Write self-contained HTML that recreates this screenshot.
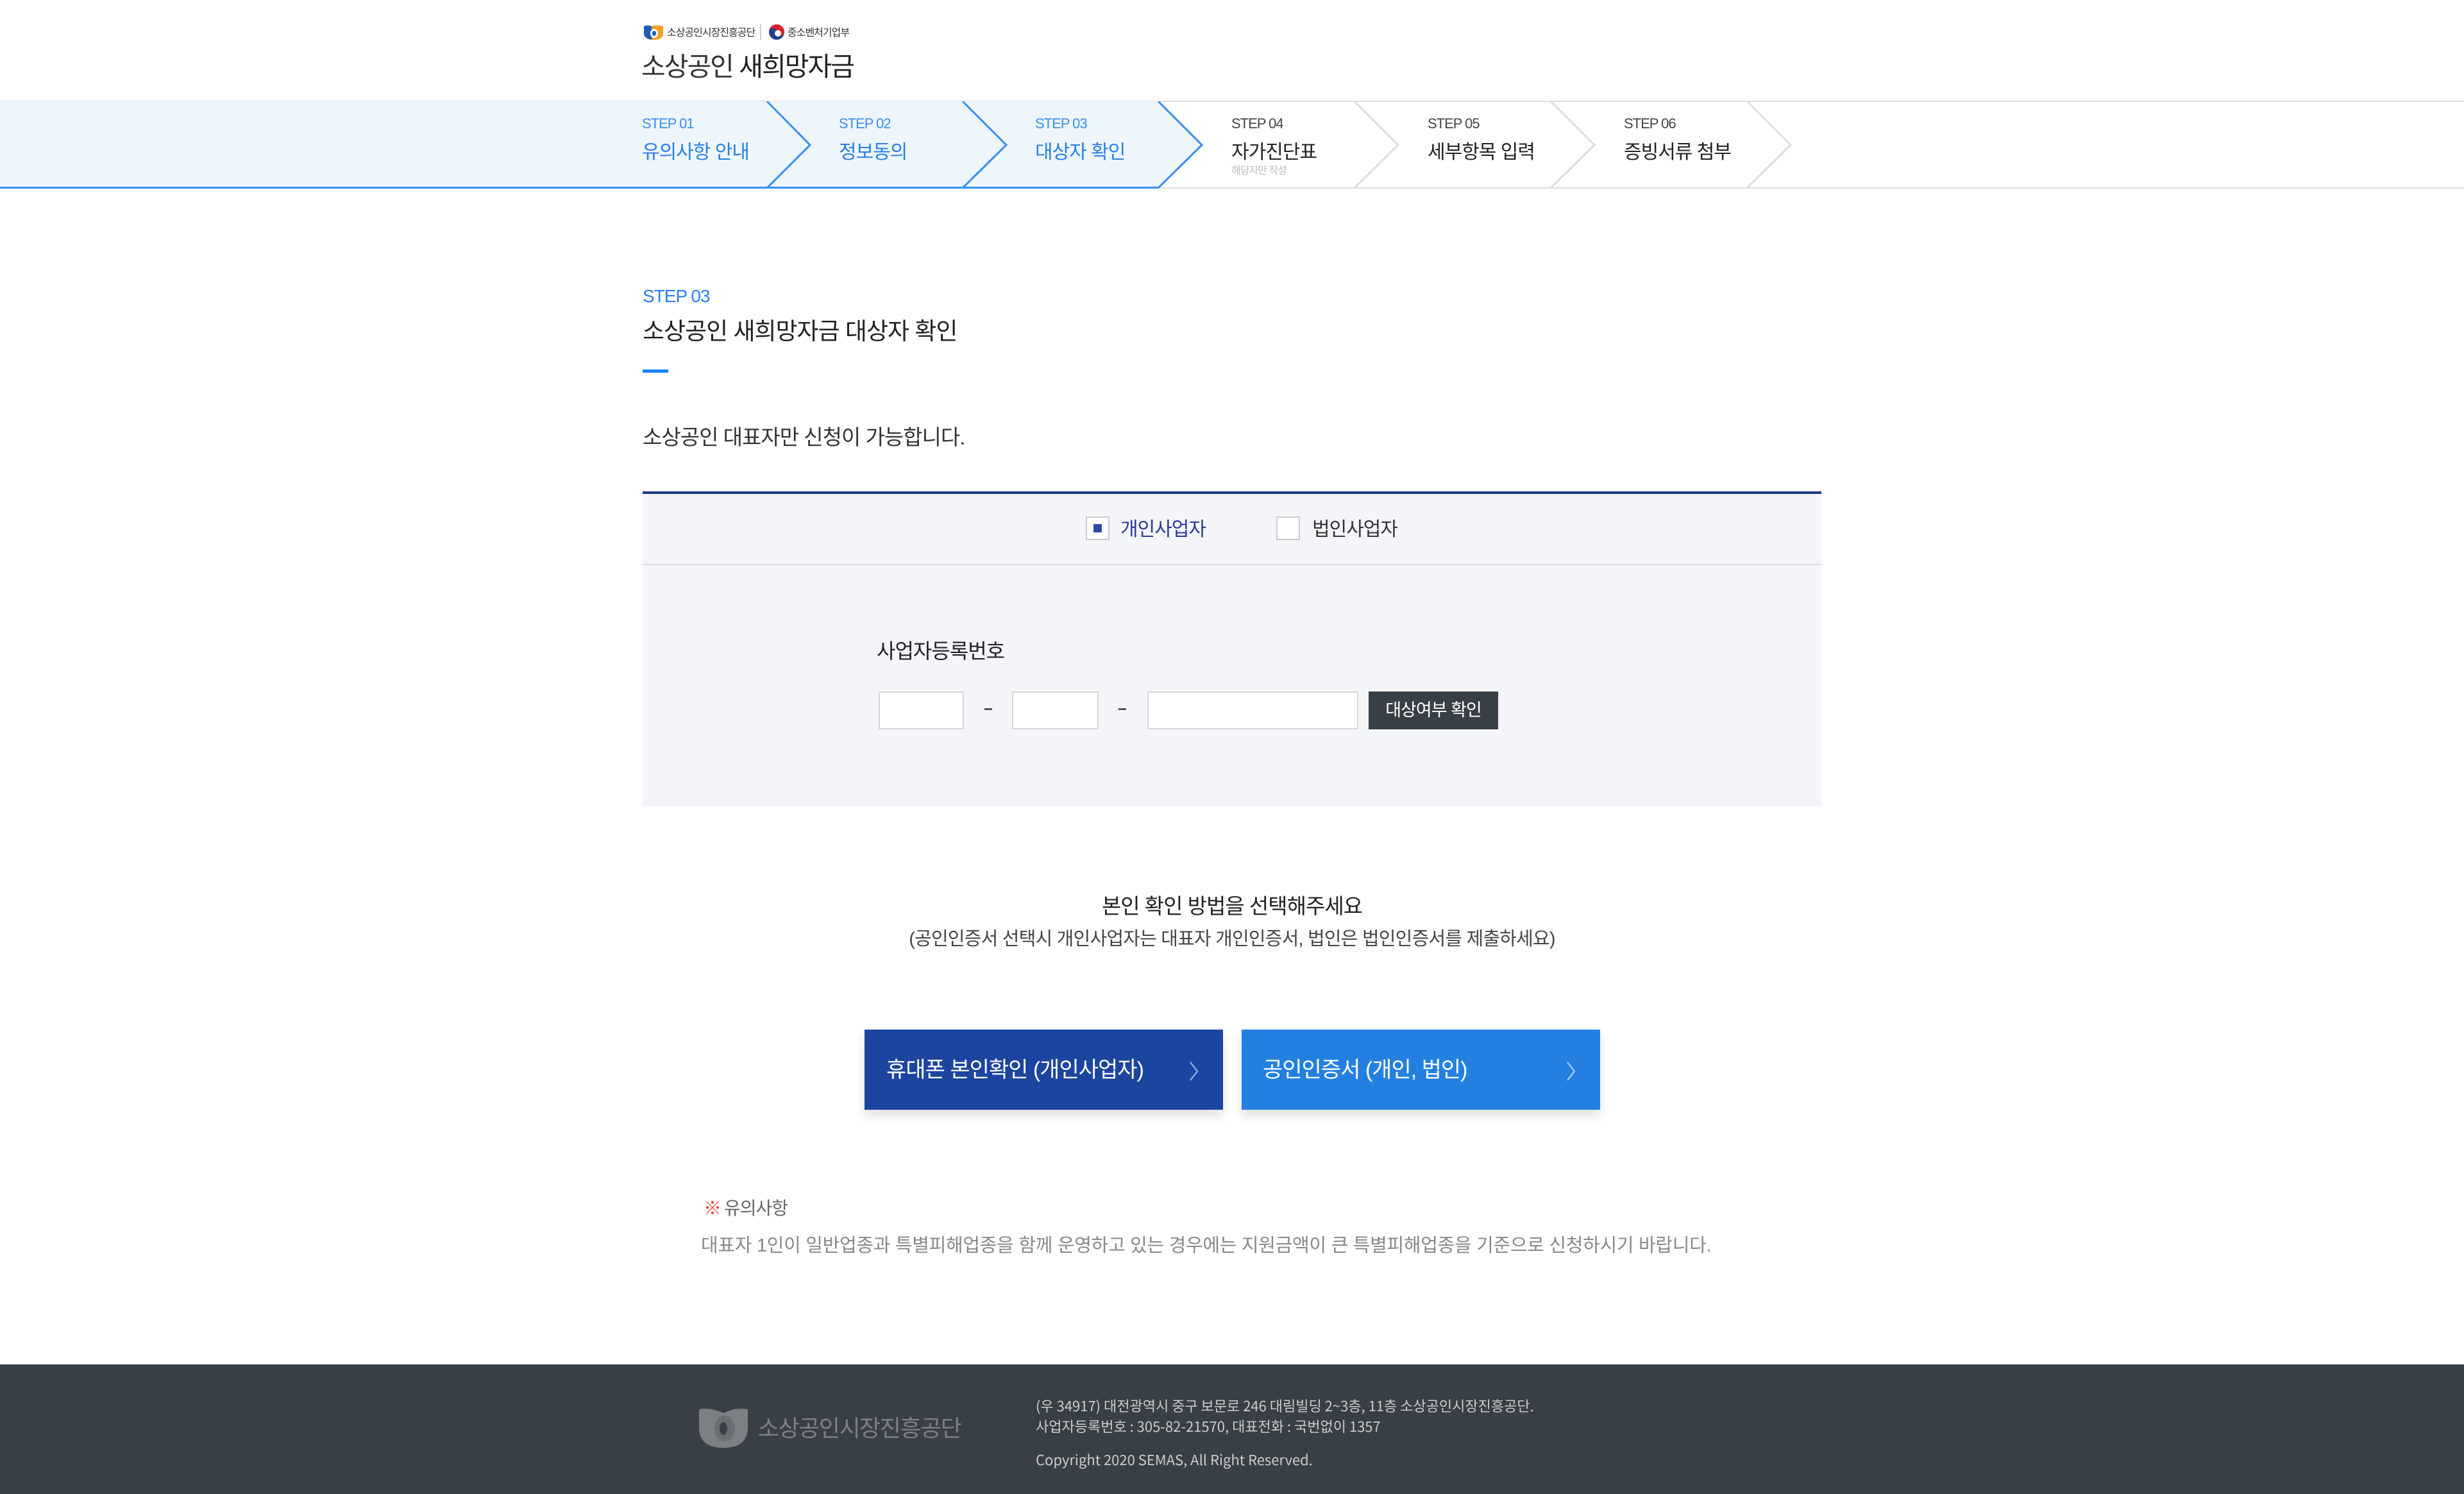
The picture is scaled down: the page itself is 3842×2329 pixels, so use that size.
<!DOCTYPE html>
<html><head><meta charset="utf-8">
<style>
*{margin:0;padding:0;box-sizing:border-box}
html,body{width:3842px;height:2329px;background:#fff;overflow:hidden}
body{font-family:"Liberation Sans","Noto Sans CJK KR",sans-serif;color:#222;position:relative;letter-spacing:-1px}
.a{position:absolute;white-space:nowrap}
</style></head><body>

<svg class="a" style="left:1002px;top:38px" width="34" height="24" viewBox="0 0 34 24">
<path d="M2 3 Q8 0 14 3 Q20 0 32 3 L32 14 Q32 24 17 24 Q2 24 2 14Z" fill="#f0a020"/>
<path d="M2 3 Q8 0 14 3 L14 24 Q2 22 2 14Z" fill="#1f5cb8"/>
<ellipse cx="18" cy="14" rx="6" ry="7" fill="#fff"/><ellipse cx="18" cy="14" rx="3" ry="4" fill="#1f5cb8"/>
</svg>
<div class="a" style="left:1040px;top:37px;font-size:16px;color:#333;letter-spacing:-1px">소상공인시장진흥공단</div>
<div class="a" style="left:1185px;top:38px;width:2px;height:24px;background:#ccc"></div>
<svg class="a" style="left:1198px;top:37px" width="26" height="26" viewBox="0 0 26 26">
<circle cx="13" cy="13" r="12" fill="#1f3f8f"/><path d="M1 13 A12 12 0 0 1 25 13 A6 6 0 0 1 13 13 A6 6 0 0 0 1 13Z" fill="#d8232a"/>
<circle cx="15" cy="15" r="5" fill="#fff"/>
</svg>
<div class="a" style="left:1228px;top:37px;font-size:16px;color:#333">중소벤처기업부</div>
<div class="a" style="left:1000px;top:70px;font-size:41px;color:#333;letter-spacing:-2px">소상공인 <span style="color:#222">새희망자금</span></div>

<div class="a" style="left:0;top:157px;width:3842px;height:2px;background:#ddd"></div>
<div class="a" style="left:0;top:292px;width:3842px;height:2px;background:#ddd"></div>
<svg class="a" style="left:0;top:158px" width="3842" height="136" viewBox="0 0 3842 136">
<polygon points="0,0 1806,0 1874,68 1806,135 0,135" fill="#eef6fd"/>
<g fill="none" stroke-width="3">
<polyline points="1196,0 1263,68 1196,135" stroke="#3a8ef0"/>
<polyline points="1501,0 1569,68 1501,135" stroke="#3a8ef0"/>
<polyline points="1806,0 1874,68 1806,135" stroke="#3a8ef0"/>
<polyline points="2112,0 2180,68 2112,135" stroke="#dcdcdc"/>
<polyline points="2418,0 2486,68 2418,135" stroke="#dcdcdc"/>
<polyline points="2724,0 2792,68 2724,135" stroke="#dcdcdc"/>
</g>
<rect x="0" y="133" width="1806" height="3" fill="#3a8ef0"/>
</svg>
<div class="a" style="left:1001px;top:180px;font-size:22px;color:#3a8ef0">STEP 01</div>
<div class="a" style="left:1001px;top:212px;font-size:30px;color:#2a7fe6">유의사항 안내</div>
<div class="a" style="left:1308px;top:180px;font-size:22px;color:#3a8ef0">STEP 02</div>
<div class="a" style="left:1308px;top:212px;font-size:30px;color:#2a7fe6">정보동의</div>
<div class="a" style="left:1614px;top:180px;font-size:22px;color:#3a8ef0">STEP 03</div>
<div class="a" style="left:1614px;top:212px;font-size:30px;color:#2a7fe6">대상자 확인</div>
<div class="a" style="left:1920px;top:180px;font-size:22px;color:#444">STEP 04</div>
<div class="a" style="left:1920px;top:212px;font-size:30px;color:#222">자가진단표</div>
<div class="a" style="left:1920px;top:252px;font-size:16px;color:#bbb">해당자만 작성</div>
<div class="a" style="left:2226px;top:180px;font-size:22px;color:#444">STEP 05</div>
<div class="a" style="left:2226px;top:212px;font-size:30px;color:#222">세부항목 입력</div>
<div class="a" style="left:2532px;top:180px;font-size:22px;color:#444">STEP 06</div>
<div class="a" style="left:2532px;top:212px;font-size:30px;color:#222">증빙서류 첨부</div>

<div class="a" style="left:1002px;top:446px;font-size:28px;color:#2a7fe6">STEP 03</div>
<div class="a" style="left:1002px;top:486px;font-size:37px;color:#222">소상공인 새희망자금 대상자 확인</div>
<div class="a" style="left:1002px;top:576px;width:40px;height:5px;background:#1a82f0"></div>
<div class="a" style="left:1002px;top:655px;font-size:33px;color:#333">소상공인 대표자만 신청이 가능합니다.</div>

<div class="a" style="left:1002px;top:766px;width:1838px;height:491px;background:#f4f5f9;border-top:4px solid #1d3a87"></div>
<div class="a" style="left:1002px;top:879px;width:1838px;height:2px;background:#ddd"></div>
<div class="a" style="left:1693px;top:805px;width:37px;height:37px;background:#fff;border:2px solid #ccc"><div style="position:absolute;left:10px;top:10px;width:13px;height:13px;background:#2b4aa8"></div></div>
<div class="a" style="left:1747px;top:800px;font-size:30px;color:#2b3a9a">개인사업자</div>
<div class="a" style="left:1990px;top:805px;width:37px;height:37px;background:#fff;border:2px solid #ccc"></div>
<div class="a" style="left:2046px;top:800px;font-size:30px;color:#333">법인사업자</div>

<div class="a" style="left:1367px;top:990px;font-size:32px;color:#222">사업자등록번호</div>
<div class="a" style="left:1370px;top:1078px;width:133px;height:59px;background:#fff;border:2px solid #d6d6d6"></div>
<div class="a" style="left:1535px;top:1104px;width:12px;height:3px;background:#555"></div>
<div class="a" style="left:1578px;top:1078px;width:135px;height:59px;background:#fff;border:2px solid #d6d6d6"></div>
<div class="a" style="left:1744px;top:1104px;width:12px;height:3px;background:#555"></div>
<div class="a" style="left:1789px;top:1078px;width:329px;height:59px;background:#fff;border:2px solid #d6d6d6"></div>
<div class="a" style="left:2134px;top:1078px;width:202px;height:59px;background:#393f46;color:#fff;font-size:27px;text-align:center;line-height:59px">대상여부 확인</div>

<div class="a" style="left:0;width:3842px;text-align:center;top:1386px;font-size:33px;color:#222">본인 확인 방법을 선택해주세요</div>
<div class="a" style="left:0;width:3842px;text-align:center;top:1440px;font-size:29px;color:#444;letter-spacing:-0.8px">(공인인증서 선택시 개인사업자는 대표자 개인인증서, 법인은 법인인증서를 제출하세요)</div>

<div class="a" style="left:1348px;top:1605px;width:559px;height:125px;background:#1c45a0;box-shadow:0 10px 16px rgba(0,0,0,.12)"></div>
<div class="a" style="left:1382px;top:1640px;font-size:34px;color:#fff">휴대폰 본인확인 (개인사업자)</div>
<svg class="a" style="left:1852px;top:1653px" width="20" height="34" viewBox="0 0 20 34"><polyline points="4,3 15,17 4,31" fill="none" stroke="#8fa6d8" stroke-width="2.5"/></svg>
<div class="a" style="left:1936px;top:1605px;width:559px;height:125px;background:#2480e0;box-shadow:0 10px 16px rgba(0,0,0,.12)"></div>
<div class="a" style="left:1969px;top:1640px;font-size:34px;color:#fff">공인인증서 (개인, 법인)</div>
<svg class="a" style="left:2440px;top:1653px" width="20" height="34" viewBox="0 0 20 34"><polyline points="4,3 15,17 4,31" fill="none" stroke="#9cc5f2" stroke-width="2.5"/></svg>

<div class="a" style="left:1097px;top:1862px;font-size:28px;color:#e8403a">※</div>
<div class="a" style="left:1129px;top:1862px;font-size:28px;color:#666">유의사항</div>
<div class="a" style="left:1093px;top:1918px;font-size:29px;color:#888;letter-spacing:-0.3px">대표자 1인이 일반업종과 특별피해업종을 함께 운영하고 있는 경우에는 지원금액이 큰 특별피해업종을 기준으로 신청하시기 바랍니다.</div>

<div class="a" style="left:0;top:2127px;width:3842px;height:202px;background:#393f46"></div>
<svg class="a" style="left:1090px;top:2195px" width="76" height="62" viewBox="0 0 76 62">
<path d="M0 2 Q18 -2 38 8 Q58 -2 76 2 L76 30 Q76 62 38 62 Q0 62 0 30Z" fill="#7c7f83"/>
<ellipse cx="40" cy="32" rx="16" ry="20" fill="#6a6d71"/><ellipse cx="38" cy="32" rx="6" ry="10" fill="#393f46"/>
</svg>
<div class="a" style="left:1182px;top:2198px;font-size:36px;color:#7d8084;letter-spacing:-1.5px">소상공인시장진흥공단</div>
<div class="a" style="left:1615px;top:2175px;font-size:22px;color:#ccc;font-family:'Noto Sans CJK KR',sans-serif;letter-spacing:0">(우 34917) 대전광역시 중구 보문로 246 대림빌딩 2~3층, 11층 소상공인시장진흥공단.</div>
<div class="a" style="left:1615px;top:2207px;font-size:22px;color:#ccc;font-family:'Noto Sans CJK KR',sans-serif;letter-spacing:0">사업자등록번호 : 305-82-21570, 대표전화 : 국번없이 1357</div>
<div class="a" style="left:1615px;top:2259px;font-size:22px;color:#ccc;font-family:'Noto Sans CJK KR',sans-serif;letter-spacing:0">Copyright 2020 SEMAS, All Right Reserved.</div>
</body></html>
